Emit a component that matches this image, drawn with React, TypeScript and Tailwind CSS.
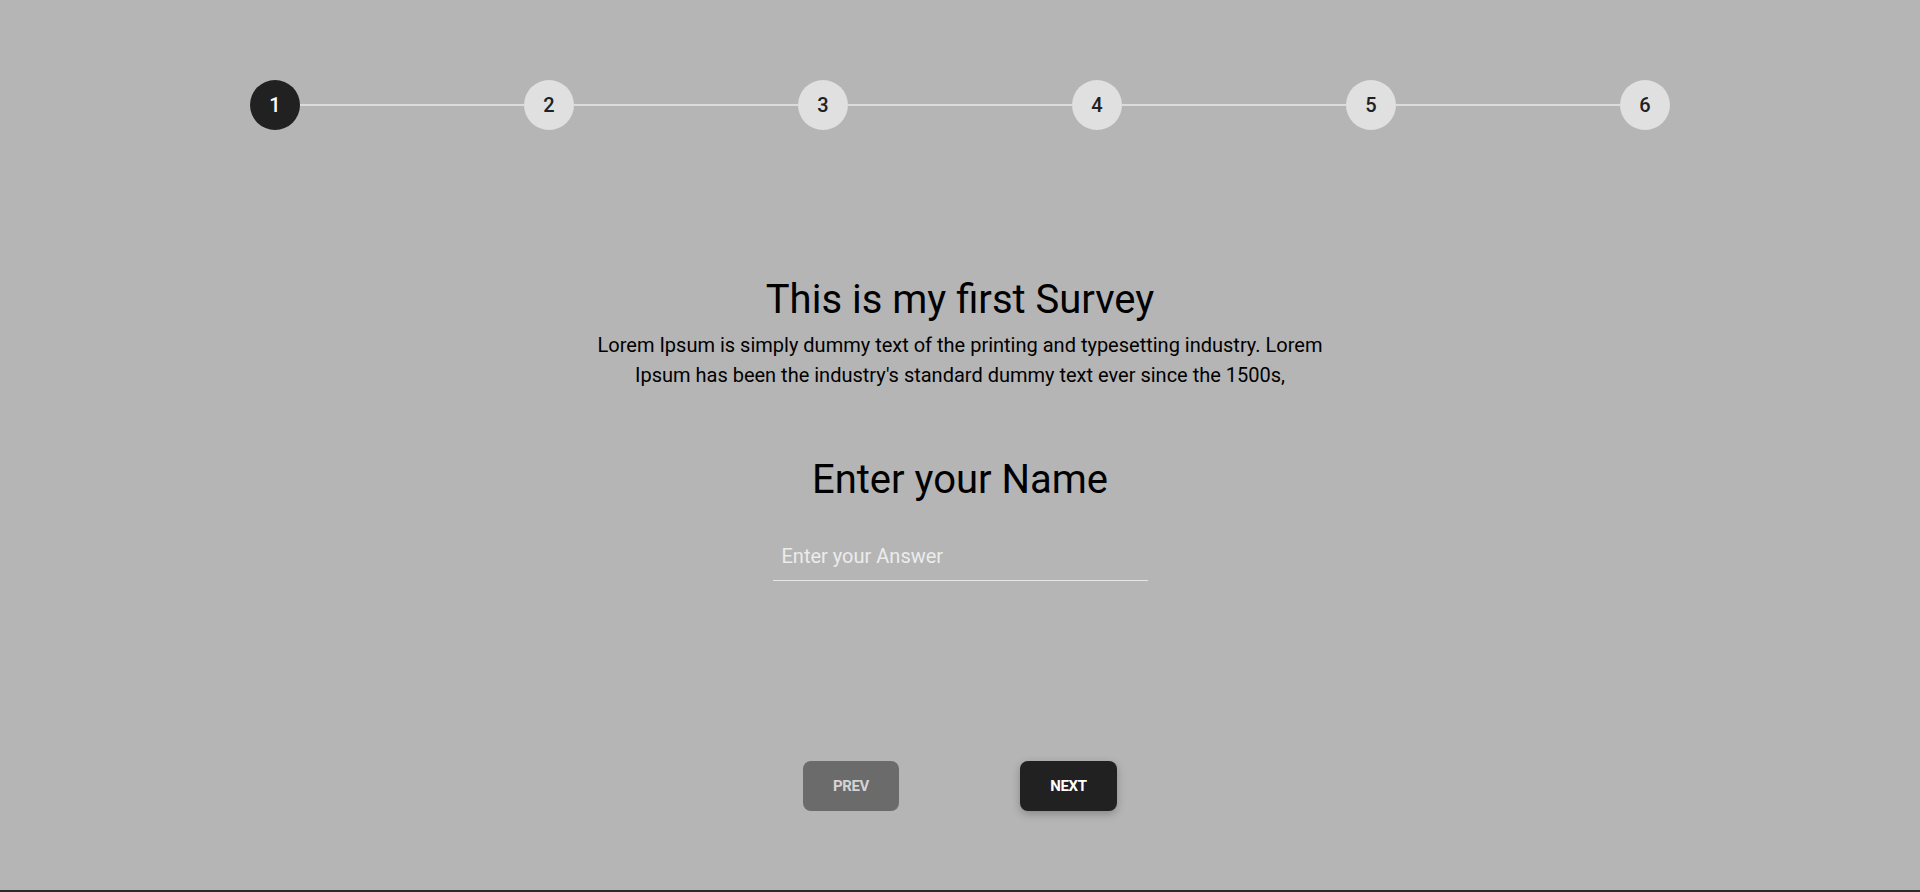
import React from "react";

const steps = [1, 2, 3, 4, 5, 6];

const Stepper = ({ active }: { active: number }) => (
  <div className="mt-[80px] flex w-[1420px] items-center">
    {steps.map((n, i) => (
      <React.Fragment key={n}>
        {i > 0 && <div className="h-[2px] flex-1 bg-[#dcdcdc]" />}
        <div
          className={
            n === active
              ? "flex h-[50px] w-[50px] items-center justify-center rounded-full bg-[#212121] text-[20px] font-medium text-white"
              : "flex h-[50px] w-[50px] items-center justify-center rounded-full bg-[#e0e0e0] text-[20px] font-medium text-[#212121]"
          }
        >
          {n}
        </div>
      </React.Fragment>
    ))}
  </div>
);

export default function App() {
  return (
    <div className="flex h-[892px] flex-col bg-[#b5b5b5] font-['Roboto',sans-serif] text-black">
      <div className="flex flex-1 flex-col items-center">
        <Stepper active={1} />

        <h1 className="mt-[146px] text-[40px] leading-[48px] font-normal">This is my first Survey</h1>
        <p className="mt-[6px] w-[750px] text-center text-[20px] leading-[30px]">
          Lorem Ipsum is simply dummy text of the printing and typesetting industry. Lorem Ipsum has been the
          industry's standard dummy text ever since the 1500s,
        </p>

        <h2 className="mt-[66px] text-[40px] leading-[48px] font-normal">Enter your Name</h2>
        <input
          type="text"
          placeholder="Enter your Answer"
          className="mt-[27px] h-[50px] w-[375px] border-b border-[#e6e6e6] bg-transparent pl-[9px] text-[20px] text-black outline-none placeholder:text-[#ececec]"
        />

        <div className="mt-[180px] flex gap-[121px]">
          <button className="h-[50px] w-[96px] rounded-[8px] bg-[#6b6b6b] text-[15px] font-bold tracking-tight text-[#d4d4d4]">
            PREV
          </button>
          <button className="h-[50px] w-[97px] rounded-[8px] bg-[#212121] text-[15px] font-bold tracking-tight text-white shadow-[0_3px_8px_rgba(0,0,0,0.25)]">
            NEXT
          </button>
        </div>
      </div>
      <div className="h-[2px] bg-[#2b2b2b]" />
    </div>
  );
}
